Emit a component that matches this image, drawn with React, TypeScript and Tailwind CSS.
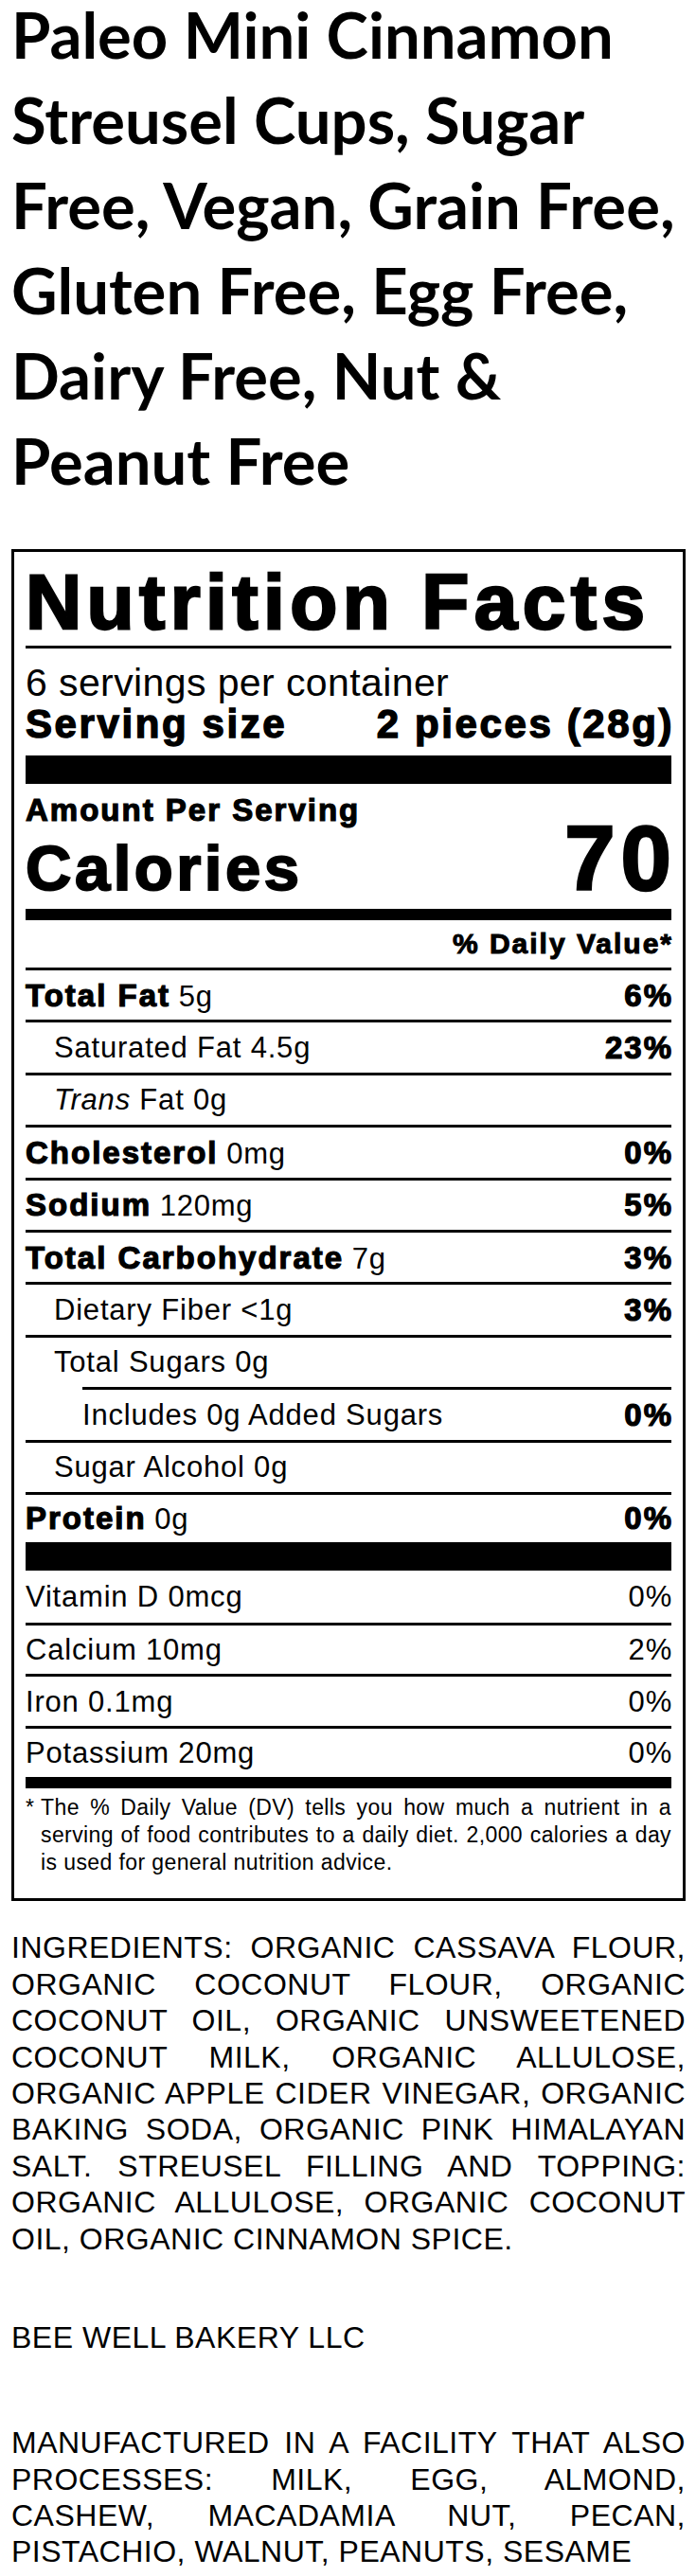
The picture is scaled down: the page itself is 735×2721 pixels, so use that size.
import React from "react";

const SANS = "font-['Liberation_Sans',Arial,Helvetica,sans-serif]";
const BOLD = "text-[33px] font-bold tracking-[2px] [-webkit-text-stroke:1.2px_#000]";
const REG = "text-[31px] font-normal tracking-[0.8px]";

type RowProps = {
  label: React.ReactNode;
  value?: React.ReactNode;
  valueBold?: boolean;
  indent?: string;
  height?: string;
  border?: boolean;
};

function Row({ label, value, valueBold = true, indent = "", height = "h-[55.4px]", border = true }: RowProps) {
  return (
    <div
      className={`flex items-center justify-between ${height} ${border ? "border-t-[3px] border-black" : ""} ${indent}`}
    >
      <div className="text-[31px] leading-none whitespace-nowrap">{label}</div>
      {value !== undefined && (
        <div className={`leading-none whitespace-nowrap ${valueBold ? BOLD + " -mr-[2px]" : REG + " -mr-[1px]"}`}>
          {value}
        </div>
      )}
    </div>
  );
}

function JLine({ children, last = false }: { children: React.ReactNode; last?: boolean }) {
  return (
    <span className={`block text-justify ${last ? "" : "[text-align-last:justify]"}`}>{children}</span>
  );
}

export default function App() {
  return (
    <div className="w-[735px] bg-white text-black pl-3 pr-[11px] pb-[11px]">
      <h1 className="font-['Lato',sans-serif] font-bold text-[67px] leading-[90px] -mt-[9px] text-black">
        Paleo Mini Cinnamon
        <br />
        Streusel Cups, Sugar
        <br />
        Free, Vegan, Grain Free,
        <br />
        Gluten Free, Egg Free,
        <br />
        Dairy Free, Nut &amp;
        <br />
        Peanut Free
      </h1>

      <div className={`mt-[49px] border-[3px] border-black px-3 pb-[23px] ${SANS}`}>
        <div className="pt-[12px] text-[82px] leading-[82px] font-bold tracking-[5.4px] [-webkit-text-stroke:2.5px_#000] whitespace-nowrap">
          Nutrition Facts
        </div>
        <div className="mt-[5px] h-[3px] bg-black" />
        <div className="mt-[14px] text-[41px] leading-[44px] tracking-[0.4px] whitespace-nowrap">6 servings per container</div>
        <div className="flex justify-between text-[42px] leading-[44px] font-bold tracking-[2.6px] [-webkit-text-stroke:1.4px_#000] whitespace-nowrap">
          <span>Serving size</span>
          <span className="-mr-[3px]">2 pieces (28g)</span>
        </div>
        <div className="mt-[11px] h-[30px] bg-black" />

        <div className={`mt-[10px] leading-[36px] ${BOLD} whitespace-nowrap`}>Amount Per Serving</div>
        <div className="flex items-baseline justify-between">
          <span className="text-[67px] leading-[60px] font-bold tracking-[3.5px] [-webkit-text-stroke:2px_#000]">Calories</span>
          <span className="text-[96px] leading-[66px] font-bold tracking-[6px] -mr-[6px] [-webkit-text-stroke:2.5px_#000]">70</span>
        </div>
        <div className="mt-[13px] h-[12px] bg-black" />

        <div className="mt-[8px] text-right text-[30px] leading-[34px] font-bold tracking-[2px] -mr-[2px] [-webkit-text-stroke:1px_#000]">
          % Daily Value*
        </div>
        <div className="mt-[8px]">
          <Row label={<><span className={BOLD}>Total Fat</span> <span className={REG}>5g</span></>} value="6%" />
          <Row indent="pl-[30px]" label={<span className={REG}>Saturated Fat 4.5g</span>} value="23%" />
          <Row indent="pl-[30px]" label={<span className={REG}><i>Trans</i> Fat 0g</span>} />
          <Row label={<><span className={BOLD}>Cholesterol</span> <span className={REG}>0mg</span></>} value="0%" />
          <Row label={<><span className={BOLD}>Sodium</span> <span className={REG}>120mg</span></>} value="5%" />
          <Row label={<><span className={BOLD}>Total Carbohydrate</span> <span className={REG}>7g</span></>} value="3%" />
          <Row indent="pl-[30px]" label={<span className={REG}>Dietary Fiber &lt;1g</span>} value="3%" />
          <Row indent="pl-[30px]" label={<span className={REG}>Total Sugars 0g</span>} />
          <Row indent="ml-[60px]" label={<span className={REG}>Includes 0g Added Sugars</span>} value="0%" />
          <Row indent="pl-[30px]" label={<span className={REG}>Sugar Alcohol 0g</span>} />
          <Row height="h-[53px]" label={<><span className={BOLD}>Protein</span> <span className={REG}>0g</span></>} value="0%" />
        </div>
        <div className="h-[30px] bg-black" />
        <Row border={false} height="h-[55px]" label={<span className={REG}>Vitamin D 0mcg</span>} value="0%" valueBold={false} />
        <Row height="h-[54.5px]" label={<span className={REG}>Calcium 10mg</span>} value="2%" valueBold={false} />
        <Row height="h-[54.5px]" label={<span className={REG}>Iron 0.1mg</span>} value="0%" valueBold={false} />
        <Row height="h-[54.5px]" label={<span className={REG}>Potassium 20mg</span>} value="0%" valueBold={false} />
        <div className="h-[12px] bg-black" />

        <div className="mt-[6px] flex text-[23px] leading-[29px] tracking-[0.4px]">
          <span className="w-[16px] shrink-0">*</span>
          <div className="flex-1">
            <JLine>The % Daily Value (DV) tells you how much a nutrient in a</JLine>
            <JLine>serving of food contributes to a daily diet. 2,000 calories a day</JLine>
            <JLine last>is used for general nutrition advice.</JLine>
          </div>
        </div>
      </div>

      <div className={`${SANS} text-[32px] leading-[1.2] tracking-[0.5px]`}>
        <p className="mt-[30px]">
          <JLine>INGREDIENTS: ORGANIC CASSAVA FLOUR,</JLine>
          <JLine>ORGANIC COCONUT FLOUR, ORGANIC</JLine>
          <JLine>COCONUT OIL, ORGANIC UNSWEETENED</JLine>
          <JLine>COCONUT MILK, ORGANIC ALLULOSE,</JLine>
          <JLine>ORGANIC APPLE CIDER VINEGAR, ORGANIC</JLine>
          <JLine>BAKING SODA, ORGANIC PINK HIMALAYAN</JLine>
          <JLine>SALT. STREUSEL FILLING AND TOPPING:</JLine>
          <JLine>ORGANIC ALLULOSE, ORGANIC COCONUT</JLine>
          <JLine last>OIL, ORGANIC CINNAMON SPICE.</JLine>
        </p>
        <p className="mt-[66px]">BEE WELL BAKERY LLC</p>
        <p className="mt-[73px]">
          <JLine>MANUFACTURED IN A FACILITY THAT ALSO</JLine>
          <JLine>PROCESSES: MILK, EGG, ALMOND,</JLine>
          <JLine>CASHEW, MACADAMIA NUT, PECAN,</JLine>
          <JLine last>PISTACHIO, WALNUT, PEANUTS, SESAME</JLine>
        </p>
      </div>
    </div>
  );
}
